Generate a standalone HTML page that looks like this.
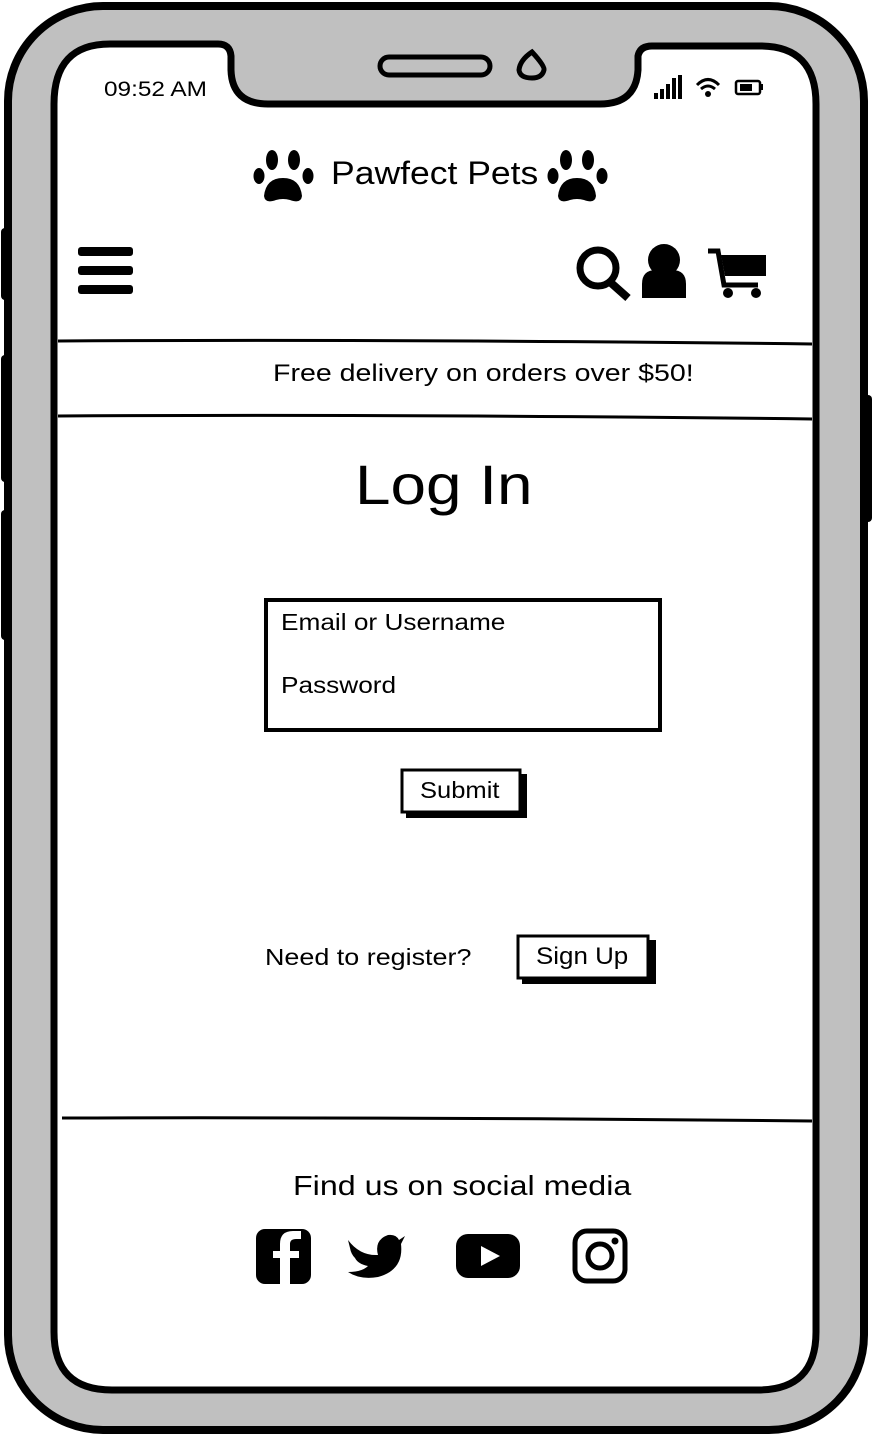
<!DOCTYPE html>
<html><head><meta charset="utf-8"><style>
body{margin:0;width:872px;height:1436px;background:#fff;position:relative;overflow:hidden;font-family:"Liberation Sans",sans-serif;color:#000}
.t{position:absolute;white-space:nowrap;transform-origin:0 0}
</style></head><body>
<svg width="872" height="1436" style="position:absolute;left:0;top:0">
<rect x="1" y="228" width="10" height="72" rx="4" fill="#000"/>
<rect x="1" y="355" width="10" height="127" rx="4" fill="#000"/>
<rect x="1" y="510" width="10" height="130" rx="4" fill="#000"/>
<rect x="858" y="395" width="14" height="127" rx="4" fill="#000"/>
<rect x="8" y="6" width="856" height="1424" rx="95" fill="#c0c0c0" stroke="#000" stroke-width="8"/>
<path d="M110 44 H218 Q230 44 231 56 V70 Q232 104 268 104 H600 Q636 104 638 70 V56 Q640 46 652 46 H760 Q816 46 816 104 V1332 Q816 1390 758 1390 H112 Q54 1390 54 1332 V104 Q54 44 110 44Z" fill="#fff" stroke="#000" stroke-width="7"/>
<rect x="380" y="57" width="110" height="18" rx="9" fill="none" stroke="#000" stroke-width="5"/>
<path d="M532 52 Q545 66 544 70 Q542 78 532 78 Q520 78 519 70 Q520 60 532 52Z" fill="none" stroke="#000" stroke-width="5"/>
<g fill="#000"><rect x="654" y="93" width="4" height="6"/><rect x="660" y="89" width="4" height="10"/><rect x="666" y="84" width="4" height="15"/><rect x="672" y="78" width="4" height="21"/><rect x="678" y="75" width="4" height="24"/></g>
<path d="M697 85 Q708 74 719 85 M701 89 Q708 83 715 89" stroke="#000" stroke-width="3" fill="none"/><circle cx="708" cy="94" r="3"/>
<rect x="736" y="81" width="24" height="13" rx="2" fill="none" stroke="#000" stroke-width="2.5"/><rect x="740" y="84" width="12" height="7"/><rect x="760" y="84" width="3" height="6"/>
<g fill="#000"><rect x="78" y="247" width="55" height="9" rx="3"/><rect x="78" y="266" width="55" height="9" rx="3"/><rect x="78" y="285" width="55" height="9" rx="3"/></g>
<circle cx="598" cy="268" r="18" fill="none" stroke="#000" stroke-width="7"/><path d="M610 282 L628 298" stroke="#000" stroke-width="8"/>
<circle cx="664" cy="260" r="16"/><path d="M642 298 V284 Q642 270 656 270 H672 Q686 270 686 284 V298Z"/>
<path d="M708 251 H718 L724 285 H758" stroke="#000" stroke-width="5" fill="none"/><path d="M721 255 H766 V276 H725Z"/><circle cx="728" cy="293" r="5"/><circle cx="756" cy="293" r="5"/>
<g id="paw"><ellipse cx="272" cy="160" rx="6" ry="10"/><ellipse cx="294" cy="160" rx="6" ry="10"/><ellipse cx="259" cy="176" rx="5.5" ry="8"/><ellipse cx="308" cy="176" rx="5.5" ry="8"/><path d="M283 178 Q300 178 302 196 Q301 204 290 200 Q283 198 276 200 Q265 204 264 196 Q266 178 283 178Z"/></g>
<use href="#paw" x="294"/>
<path d="M58 341 Q400 339 812 344" stroke="#000" stroke-width="3" fill="none"/>
<path d="M58 416 Q400 414 812 419" stroke="#000" stroke-width="3" fill="none"/>
<path d="M62 1118 Q400 1117 812 1121" stroke="#000" stroke-width="3" fill="none"/>
<rect x="266" y="600" width="394" height="130" fill="none" stroke="#000" stroke-width="4"/>
<rect x="406" y="774" width="121" height="44" fill="#000"/><rect x="402" y="770" width="118" height="42" fill="#fff" stroke="#000" stroke-width="3"/>
<rect x="522" y="940" width="134" height="44" fill="#000"/><rect x="518" y="936" width="130" height="42" fill="#fff" stroke="#000" stroke-width="3"/>
<rect x="256" y="1229" width="55" height="55" rx="9"/><path d="M290 1284 V1258 H299 V1251 H290 V1244 Q290 1239 296 1239 H301 V1231 H293 Q280 1231 280 1244 V1251 H273 V1258 H280 V1284Z" fill="#fff"/>
<path d="M348 1240 Q360 1256 378 1255 Q374 1240 388 1235 Q396 1234 399 1240 L405 1236 L401 1244 Q404 1270 378 1277 Q360 1280 348 1272 Q362 1272 368 1266 Q358 1264 355 1258 Q351 1254 350 1248Z"/>
<rect x="456" y="1234" width="64" height="44" rx="12"/><path d="M481 1246 L500 1256 L481 1266Z" fill="#fff"/>
<rect x="575" y="1231" width="50" height="50" rx="12" fill="none" stroke="#000" stroke-width="5"/><circle cx="600" cy="1256" r="12" fill="none" stroke="#000" stroke-width="5"/><circle cx="615" cy="1241" r="3.5"/>
</svg>
<div class="t" style="left:104px;top:78px;font-size:21px;transform:scaleX(1.16)">09:52 AM</div>
<div class="t" style="left:331px;top:155px;font-size:32px;transform:scaleX(1.11)">Pawfect Pets</div>
<div class="t" style="left:273px;top:360px;font-size:24px;transform:scaleX(1.19)">Free delivery on orders over $50!</div>
<div class="t" style="left:355px;top:452px;font-size:56px;transform:scaleX(1.14)">Log In</div>
<div class="t" style="left:281px;top:609px;font-size:23px;transform:scaleX(1.14)">Email or Username</div>
<div class="t" style="left:281px;top:672px;font-size:23px;transform:scaleX(1.14)">Password</div>
<div class="t" style="left:420px;top:777px;font-size:23px;transform:scaleX(1.11)">Submit</div>
<div class="t" style="left:265px;top:944px;font-size:23px;transform:scaleX(1.17)">Need to register?</div>
<div class="t" style="left:536px;top:943px;font-size:24px;transform:scaleX(1.08)">Sign Up</div>
<div class="t" style="left:293px;top:1170px;font-size:28px;transform:scaleX(1.15)">Find us on social media</div>
</body></html>
